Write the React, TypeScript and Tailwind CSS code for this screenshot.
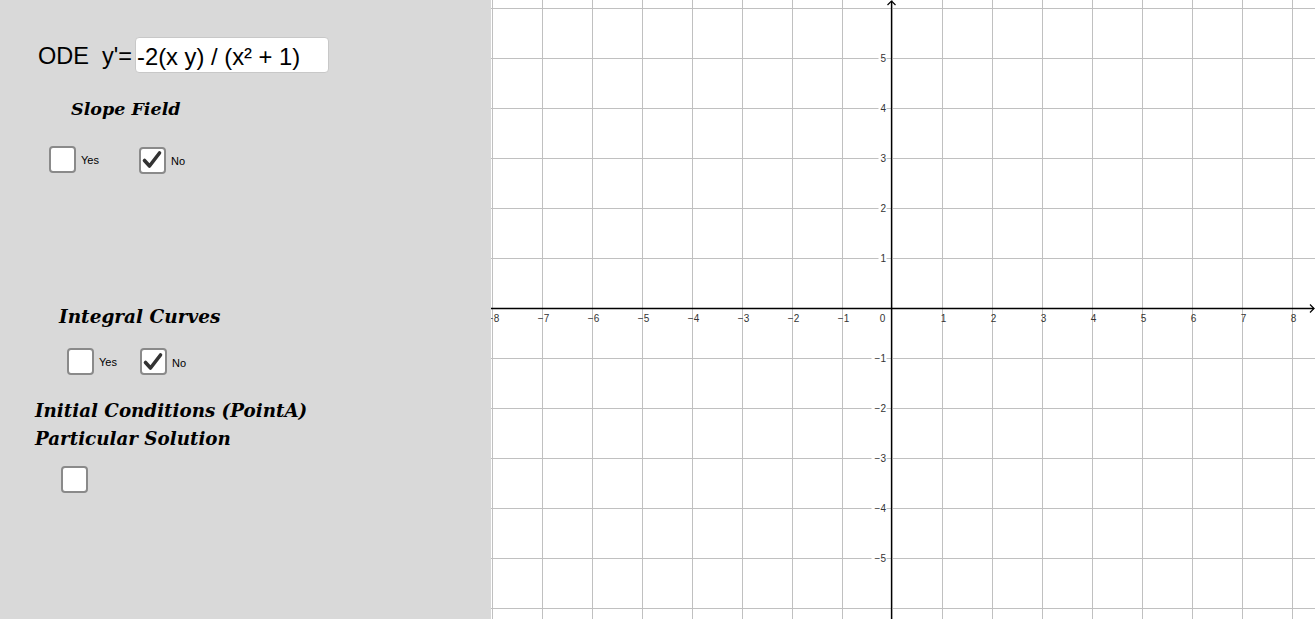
import React from "react";

function Box({ checked }: { checked?: boolean }) {
  return (
    <div className="w-[27px] h-[27px] rounded-[4px] border-2 border-[#8a8a8a] bg-white flex items-center justify-center shrink-0">
      {checked && (
        <svg width="22" height="22" viewBox="0 0 22 22">
          <path d="M3.5 11.5 L8.5 17 L18.5 4" fill="none" stroke="#333" strokeWidth="3.6" strokeLinecap="round" strokeLinejoin="round" />
        </svg>
      )}
    </div>
  );
}

function Graph() {
  const W = 824;
  const H = 619;
  const ox = 400.5;
  const oy = 308.5;
  const vlines: number[] = [];
  for (let k = -8; k <= 8; k++) vlines.push(ox + 50 * k + 1);
  const hlines: number[] = [];
  for (let k = -6; k <= 6; k++) hlines.push(oy + 50 * k);
  const xs = [-8, -7, -6, -5, -4, -3, -2, -1, 1, 2, 3, 4, 5, 6, 7, 8];
  const ys = [5, 4, 3, 2, 1, -1, -2, -3, -4, -5];
  const lf = { fontFamily: '"Liberation Sans", Arial, sans-serif' };
  return (
    <svg width={W} height={H} viewBox={`0 0 ${W} ${H}`} className="block">
      <rect x="0" y="0" width={W} height={H} fill="#ffffff" />
      {vlines.map((x) => (
        <line key={"v" + x} x1={x} y1={0} x2={x} y2={H} stroke="#c0c0c0" strokeWidth="1" />
      ))}
      {hlines.map((y) => (
        <line key={"h" + y} x1={0} y1={y} x2={W} y2={y} stroke="#c0c0c0" strokeWidth="1" />
      ))}
      {ys.map((v) => {
        const y = oy - 50 * v;
        const label = v < 0 ? "\u2212" + Math.abs(v) : String(v);
        const w = v < 0 ? 14 : 7;
        return (
          <g key={"yl" + v}>
            <rect x={ox - 6 - w} y={y - 5} width={w + 1} height={10} fill="#ffffff" />
            <text x={ox - 5.5} y={y + 3.5} fontSize="10" fill="#333" textAnchor="end" style={lf}>
              {label}
            </text>
          </g>
        );
      })}
      {xs.map((v) => {
        const x = ox + 50 * v + 1;
        const label = v < 0 ? "\u2212" + Math.abs(v) : String(v);
        return (
          <text key={"xl" + v} x={x + 1} y={oy + 13} fontSize="10" fill="#333" textAnchor="middle" style={lf}>
            {label}
          </text>
        );
      })}
      <text x={ox - 9} y={oy + 13} fontSize="10" fill="#333" textAnchor="middle" style={lf}>
        0
      </text>
      <line x1={0} y1={oy} x2={W - 1} y2={oy} stroke="#000" strokeWidth="1.3" />
      <line x1={ox} y1={1} x2={ox} y2={H} stroke="#000" strokeWidth="1.3" />
      <path d={`M${W - 5} ${oy - 4} L${W - 1} ${oy} L${W - 5} ${oy + 4}`} fill="none" stroke="#000" strokeWidth="1.2" />
      <path d={`M${ox - 4} ${5} L${ox} ${1} L${ox + 4} ${5}`} fill="none" stroke="#000" strokeWidth="1.2" />
    </svg>
  );
}

export default function App() {
  const mathFont: React.CSSProperties = {
    fontFamily: '"DejaVu Serif", "Liberation Serif", serif',
  };
  return (
    <div className="flex w-[1315px] h-[619px] overflow-hidden">
      <div className="w-[491px] h-[619px] bg-[#d9d9d9] shrink-0 flex flex-col" style={{ fontFamily: '"Liberation Sans", Arial, sans-serif' }}>
        <div className="flex items-center mt-[37px] ml-[38px] h-[36px]">
          <span className="w-[97px] text-[23.5px] text-black whitespace-pre leading-none pt-[4px]">ODE  y'=</span>
          <div className="w-[194px] h-[36px] bg-white rounded-[4px] border border-[#c8c8c8] flex items-center pl-[1px] pt-[4px] text-[23.8px] text-black leading-none whitespace-pre">
            -2(x y) / (x² + 1)
          </div>
        </div>
        <div className="ml-[71px] mt-[28px] text-[17.5px] font-bold italic text-black leading-none" style={mathFont}>
          Slope Field
        </div>
        <div className="flex items-center ml-[49px] mt-[26px]">
          <Box />
          <span className="ml-[5px] mt-[3px] text-[11px] text-black">Yes</span>
          <div className="ml-[40px] flex items-center mt-[2px]">
            <Box checked />
            <span className="ml-[5px] mt-[3px] text-[11px] text-black">No</span>
          </div>
        </div>
        <div className="ml-[59px] mt-[134px] text-[18.5px] font-bold italic text-black leading-none" style={mathFont}>
          Integral Curves
        </div>
        <div className="flex items-center ml-[67px] mt-[21px]">
          <Box />
          <span className="ml-[5px] mt-[3px] text-[11px] text-black">Yes</span>
          <div className="ml-[23px] flex items-center mt-[1px]">
            <Box checked />
            <span className="ml-[5px] mt-[3px] text-[11px] text-black">No</span>
          </div>
        </div>
        <div className="ml-[35px] mt-[22px] text-[18.3px] font-bold italic text-black leading-[28px]" style={mathFont}>
          <div>Initial Conditions (PointA)</div>
          <div>Particular Solution</div>
        </div>
        <div className="ml-[61px] mt-[13px]">
          <Box />
        </div>
      </div>
      <div className="flex-1 h-[619px] overflow-hidden">
        <Graph />
      </div>
    </div>
  );
}
